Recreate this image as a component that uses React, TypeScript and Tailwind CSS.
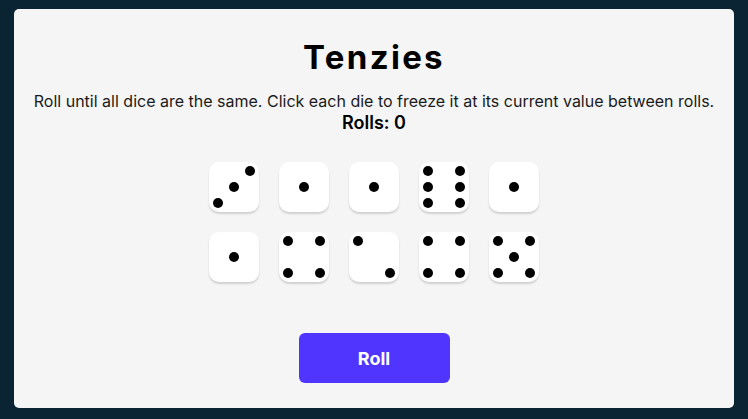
import React from "react";

const faces: number[] = [3, 1, 1, 6, 1, 1, 4, 2, 4, 5];

const pips: Record<number, number[]> = {
  1: [4],
  2: [0, 8],
  3: [2, 4, 6],
  4: [0, 2, 6, 8],
  5: [0, 2, 4, 6, 8],
  6: [0, 2, 3, 5, 6, 8],
};

function Die({ value }: { value: number }) {
  const on = pips[value];
  return (
    <div className="w-[50px] h-[50px] bg-white rounded-[10px] shadow-[0_2px_2px_rgba(0,0,0,0.15)] p-[1px] grid grid-cols-3 grid-rows-3">
      {Array.from({ length: 9 }).map((_, i) => (
        <div key={i} className="flex items-center justify-center">
          {on.includes(i) && <div className="w-[10px] h-[10px] rounded-full bg-black" />}
        </div>
      ))}
    </div>
  );
}

export default function App() {
  return (
    <div
      className="w-full h-[419px] bg-[#0B2434] pt-[9px] pl-[14px] pr-[14px] pb-[11px]"
      style={{ fontFamily: "Inter, 'Noto Sans', sans-serif" }}
    >
      <div className="h-full bg-[#F5F5F5] rounded-[5px] flex flex-col items-center pt-[28px]">
        <h1 className="text-[33px] font-bold tracking-[0.07em] text-black leading-[40px] m-0">Tenzies</h1>
        <p className="mt-[15px] text-[16px] text-[#1a1a1a] leading-[19.4px]">
          Roll until all dice are the same. Click each die to freeze it at its current value between rolls.
        </p>
        <p className="mt-[1px] text-[18px] font-semibold text-black leading-[21.8px]">Rolls: 0</p>
        <div className="mt-[28px] grid grid-cols-5 gap-[20px]">
          {faces.map((v, i) => (
            <Die key={i} value={v} />
          ))}
        </div>
        <button className="mt-[51px] w-[151px] h-[50px] bg-[#5035FF] rounded-[6px] text-white text-[18px] font-bold">
          Roll
        </button>
      </div>
    </div>
  );
}
